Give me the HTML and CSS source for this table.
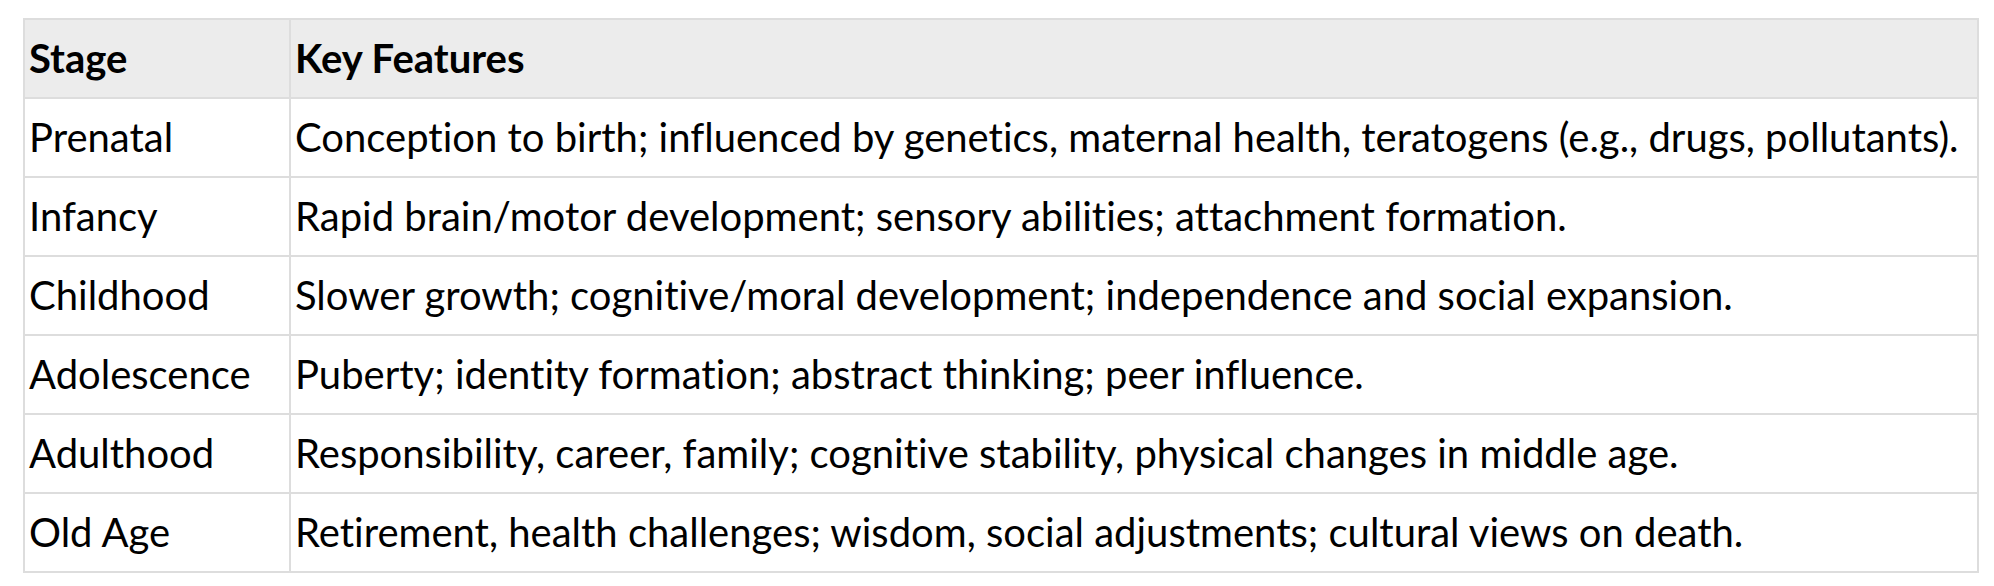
FILE: index.html
```html
<!DOCTYPE html>
<html>
<head>
<meta charset="utf-8">
<link rel="stylesheet" href="styles.css">
</head>
<body>
<table class="stages">
  <colgroup>
    <col class="col-stage">
    <col class="col-features">
  </colgroup>
  <thead>
    <tr><th>Stage</th><th>Key Features</th></tr>
  </thead>
  <tbody>
    <tr><td>Prenatal</td><td>Conception to birth; influenced by genetics, maternal health, teratogens (e.g., drugs, pollutants).</td></tr>
    <tr><td>Infancy</td><td>Rapid brain/motor development; sensory abilities; attachment formation.</td></tr>
    <tr><td>Childhood</td><td>Slower growth; cognitive/moral development; independence and social expansion.</td></tr>
    <tr><td>Adolescence</td><td>Puberty; identity formation; abstract thinking; peer influence.</td></tr>
    <tr><td>Adulthood</td><td>Responsibility, career, family; cognitive stability, physical changes in middle age.</td></tr>
    <tr><td>Old Age</td><td>Retirement, health challenges; wisdom, social adjustments; cultural views on death.</td></tr>
  </tbody>
</table>
</body>
</html>
```
FILE: styles.css
```css
html, body {
  margin: 0;
  padding: 0;
  background: #ffffff;
}
body {
  padding: 18px 0 0 23px;
  font-family: Lato, "Liberation Sans", sans-serif;
  color: #000000;
}
.stages {
  border-collapse: collapse;
  table-layout: fixed;
  width: 1956px;
  font-size: 40px;
  line-height: 1.2;
  font-variant-ligatures: none;
}
.col-stage {
  width: 266px;
}
.stages th,
.stages td {
  border: 2px solid #dddddd;
  padding: 14px 4px 15px;
  text-align: left;
  vertical-align: middle;
  white-space: nowrap;
}
.stages th {
  background: #ececec;
  font-weight: 700;
}
.stages td {
  font-weight: 400;
}
```
